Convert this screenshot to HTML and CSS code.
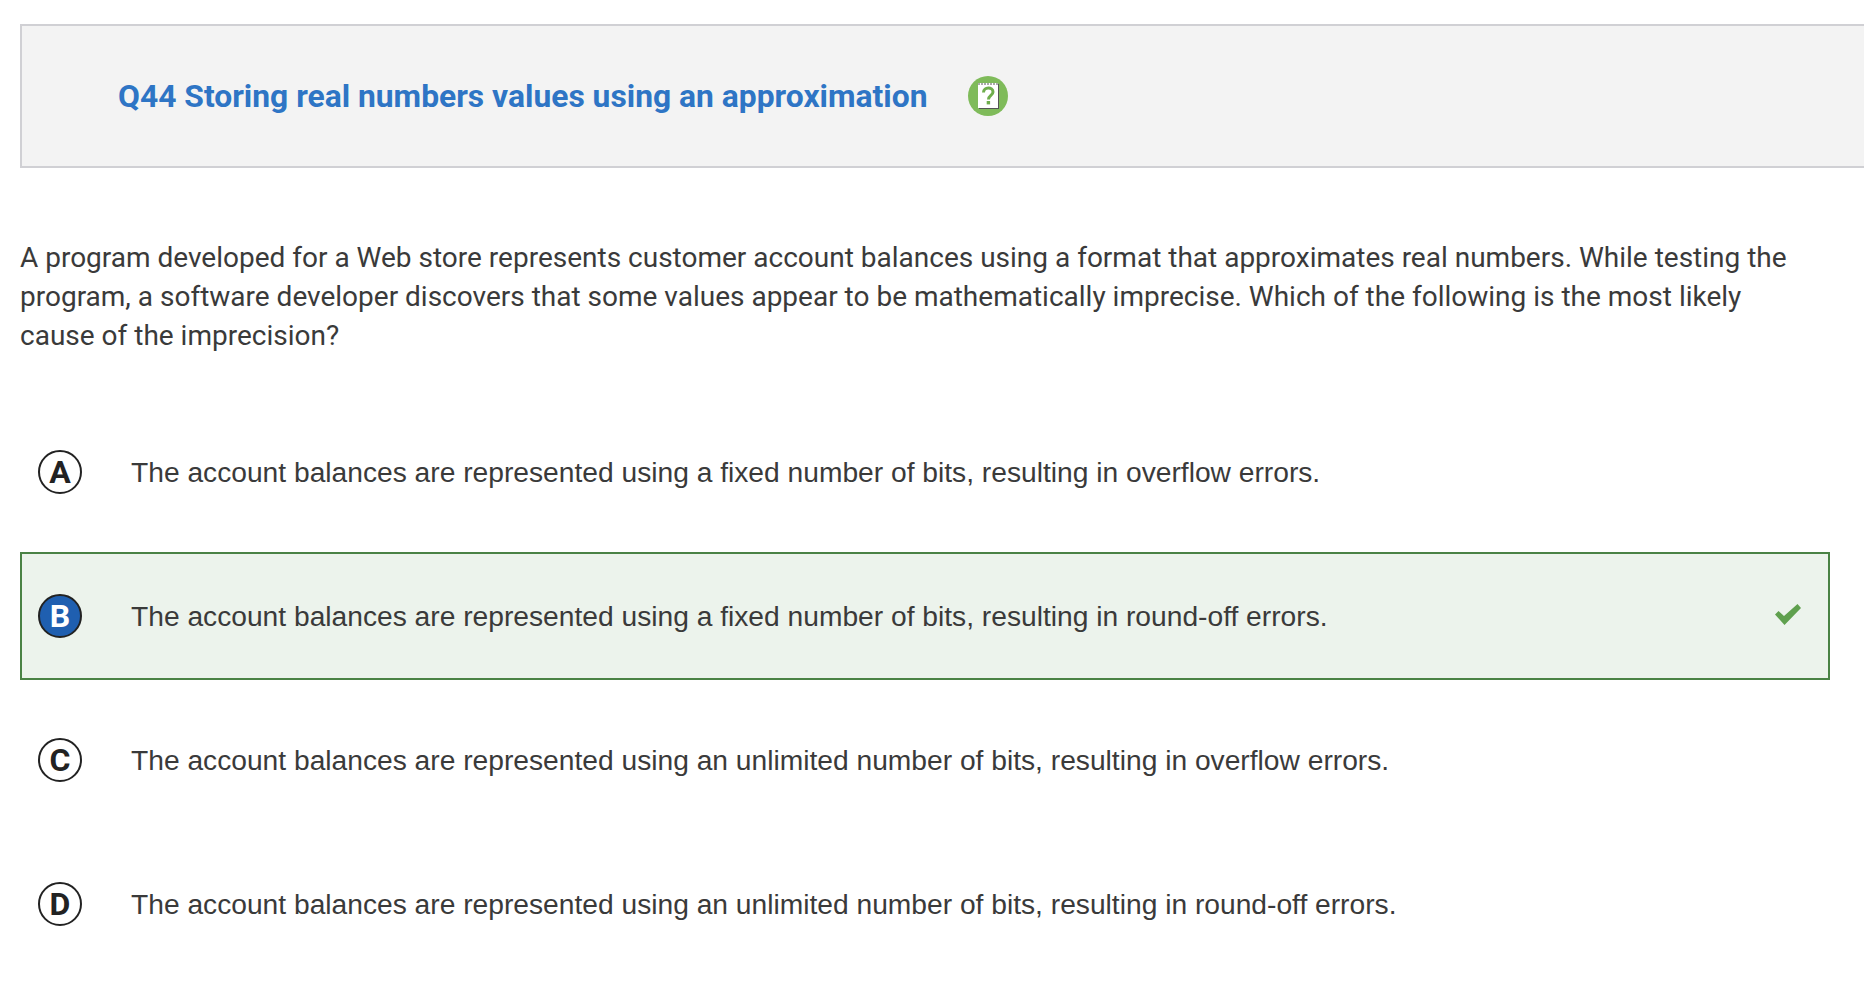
FILE: index.html
```html
<!DOCTYPE html>
<html lang="en">
<head>
    <meta charset="UTF-8">
    <title>Q44</title>
    <link rel="stylesheet" href="styles.css">
</head>
<body>
    <div class="question-header">
        <h1 class="question-title">Q44 Storing real numbers values using an approximation</h1>
        <svg class="note-icon" width="40" height="40" viewBox="0 0 40 40">
            <circle cx="20" cy="20" r="20" fill="#7fbb5a"/>
            <rect x="11" y="8" width="20" height="25" fill="#555"/>
            <rect x="10" y="7" width="20" height="25" fill="#fff"/>
            <path d="M11 7v2M14 7v2M17 7v2M20 7v2M23 7v2M26 7v2M29 7v2" stroke="#555" stroke-width="1"/>
            <path d="M15.500 16.500c0-6 9.500-6 9.500-.5 0 3.500-4.500 3.500-4.500 7.500" fill="none" stroke="#6fae4c" stroke-width="3"/>
            <rect x="18.700" y="25" width="3.400" height="3.400" fill="#6fae4c"/>
        </svg>
    </div>

    <p class="question-text">A program developed for a Web store represents customer account balances using a format that approximates real numbers. While testing the program, a software developer discovers that some values appear to be mathematically imprecise. Which of the following is the most likely cause of the imprecision?</p>

    <div class="answers">
        <div class="answer">
            <span class="letter">A</span>
            <span class="answer-text">The account balances are represented using a fixed number of bits, resulting in overflow errors.</span>
        </div>
        <div class="answer correct">
            <span class="letter selected">B</span>
            <span class="answer-text">The account balances are represented using a fixed number of bits, resulting in round-off errors.</span>
            <svg class="check" width="26" height="21" viewBox="0 0 26 21">
                <path d="M0 10.500 3.500 7 9 12 22.500 0 26 4 9.500 21z" fill="#5fa04e"/>
            </svg>
        </div>
        <div class="answer">
            <span class="letter">C</span>
            <span class="answer-text">The account balances are represented using an unlimited number of bits, resulting in overflow errors.</span>
        </div>
        <div class="answer">
            <span class="letter">D</span>
            <span class="answer-text">The account balances are represented using an unlimited number of bits, resulting in round-off errors.</span>
        </div>
    </div>
</body>
</html>
```

FILE: styles.css
```css
body {
    margin: 0;
    padding: 24px 0 0 20px;
    font-family: Roboto, Arial, sans-serif;
    color: #3a3a3a;
    background-color: #fff;
    overflow: hidden;
}

.question-header {
    display: flex;
    align-items: center;
    gap: 41px;
    height: 144px;
    box-sizing: border-box;
    padding-left: 96px;
    background-color: #f3f3f3;
    border: 2px solid #d0d0d4;
    border-right: none;
}

.question-title {
    margin: 0;
    font-size: 31.800px;
    font-weight: 700;
    color: #2e75c5;
}

.question-text {
    margin: 70px 0 0;
    width: 1780px;
    font-size: 28px;
    line-height: 39px;
}

.answers {
    display: flex;
    flex-direction: column;
    gap: 16px;
    margin-top: 53px;
    width: 1810px;
}

.answer {
    display: flex;
    align-items: center;
    height: 128px;
    box-sizing: border-box;
    padding: 0 27px 0 16px;
    border: 2px solid transparent;
}

.answer.correct {
    background-color: #ecf3ec;
    border-color: #4a8245;
}

.letter {
    display: flex;
    align-items: center;
    justify-content: center;
    width: 44px;
    height: 44px;
    box-sizing: border-box;
    flex-shrink: 0;
    border: 2px solid #222;
    border-radius: 50%;
    font-size: 32px;
    font-weight: 700;
    color: #222;
}

.letter.selected {
    background-color: #1f5fb0;
    color: #fff;
}

.answer-text {
    flex: 1;
    margin-left: 49px;
    font-family: "Liberation Sans", Arial, sans-serif;
    font-size: 28.200px;
}

.check {
    margin-bottom: 3px;
}
```
